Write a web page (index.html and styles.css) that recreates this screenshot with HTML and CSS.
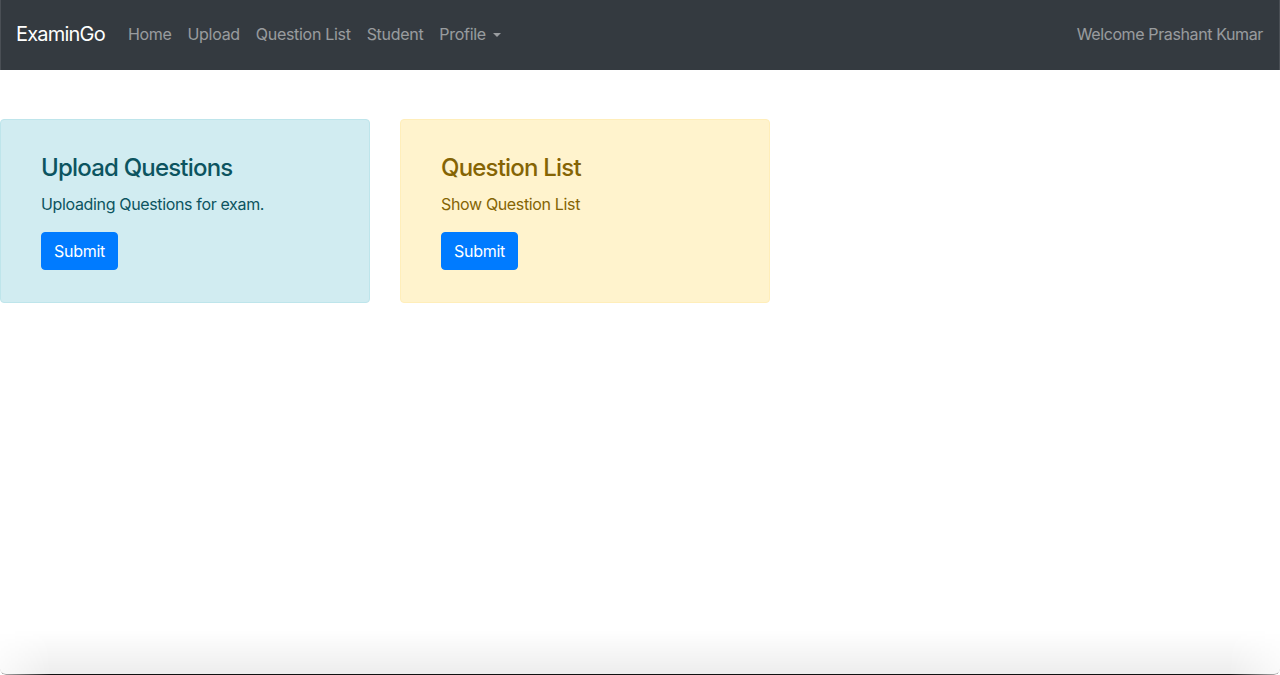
FILE: index.html
```html
<!DOCTYPE html>
<html lang="en">
<head>
<meta charset="utf-8">
<title>ExaminGo</title>
<link rel="stylesheet" href="styles.css">
</head>
<body>
<nav class="navbar">
  <a class="brand" href="#">ExaminGo</a>
  <ul class="nav">
    <li><a class="nav-link" href="#">Home</a></li>
    <li><a class="nav-link" href="#">Upload</a></li>
    <li><a class="nav-link" href="#">Question List</a></li>
    <li><a class="nav-link" href="#">Student</a></li>
    <li><a class="nav-link dropdown-toggle" href="#">Profile</a></li>
  </ul>
  <span class="welcome">Welcome Prashant Kumar</span>
</nav>
<main class="content">
  <section class="alert alert-info">
    <h4 class="alert-heading">Upload Questions</h4>
    <p class="alert-text">Uploading Questions for exam.</p>
    <button class="btn" type="button">Submit</button>
  </section>
  <section class="alert alert-warning">
    <h4 class="alert-heading">Question List</h4>
    <p class="alert-text">Show Question List</p>
    <button class="btn" type="button">Submit</button>
  </section>
</main>
<div class="window-edge"></div>
</body>
</html>
```
FILE: styles.css
```css
* { box-sizing: border-box; }
html, body { height: 100%; }
body {
  margin: 0;
  font-family: Inter, "Liberation Sans", sans-serif;
  font-size: 16px;
  line-height: 1.5;
  color: #212529;
  background: #fff;
  overflow: hidden;
}
.navbar {
  height: 70px;
  background: #343a40;
  display: flex;
  align-items: center;
  padding: 0 16px 2px;
  border-left: 1px solid #4a4f55;
  border-right: 1px solid #4a4f55;
}
.brand {
  color: #fff;
  font-size: 20px;
  text-decoration: none;
  margin-right: 15px;
  letter-spacing: -0.8px;
  margin-left: -1px;
}
.nav {
  list-style: none;
  margin: 0;
  padding: 0;
  display: flex;
  flex: 1;
}
.nav-link {
  display: block;
  padding: 0 8px;
  color: rgba(255,255,255,.5);
  text-decoration: none;
  letter-spacing: -0.3px;
}
.dropdown-toggle::after {
  content: "";
  display: inline-block;
  margin-left: .45em;
  vertical-align: .2em;
  border-top: .3em solid;
  border-right: .3em solid transparent;
  border-left: .3em solid transparent;
}
.welcome {
  color: rgba(255,255,255,.5);
  letter-spacing: -0.38px;
}
.content {
  display: flex;
  gap: 30px;
  margin-top: 49px;
}
.alert {
  width: 370px;
  padding: 34px 40px 32px;
  border: 1px solid transparent;
  border-radius: 4px;
}
.alert-info { background: #d1ecf1; border-color: #bee5eb; color: #0c5460; }
.alert-warning { background: #fff3cd; border-color: #ffeeba; color: #856404; }
.alert-heading {
  margin: 0 0 9px;
  font-size: 24px;
  font-weight: 500;
  line-height: 1.2;
  letter-spacing: -0.8px;
}
.alert-text {
  margin: 0 0 16px;
  letter-spacing: -0.35px;
}
.btn {
  display: block;
  font-family: inherit;
  font-size: 16px;
  line-height: 24px;
  border: 1px solid #007bff;
  background: #007bff;
  color: #fff;
  border-radius: 4px;
  width: 77px;
  height: 38px;
  padding: 0;
  letter-spacing: -0.3px;
}
.window-edge {
  position: fixed;
  left: 0;
  right: 0;
  bottom: 0;
  height: 45px;
  pointer-events: none;
  background: linear-gradient(to bottom, rgba(0,0,0,0), rgba(0,0,0,.07));
  border-bottom: 1px solid #111;
  border-radius: 0 0 6px 6px;
  -webkit-mask-image: linear-gradient(to right, rgba(0,0,0,.3), #000 4%, #000 96%, rgba(0,0,0,.3));
}
```
